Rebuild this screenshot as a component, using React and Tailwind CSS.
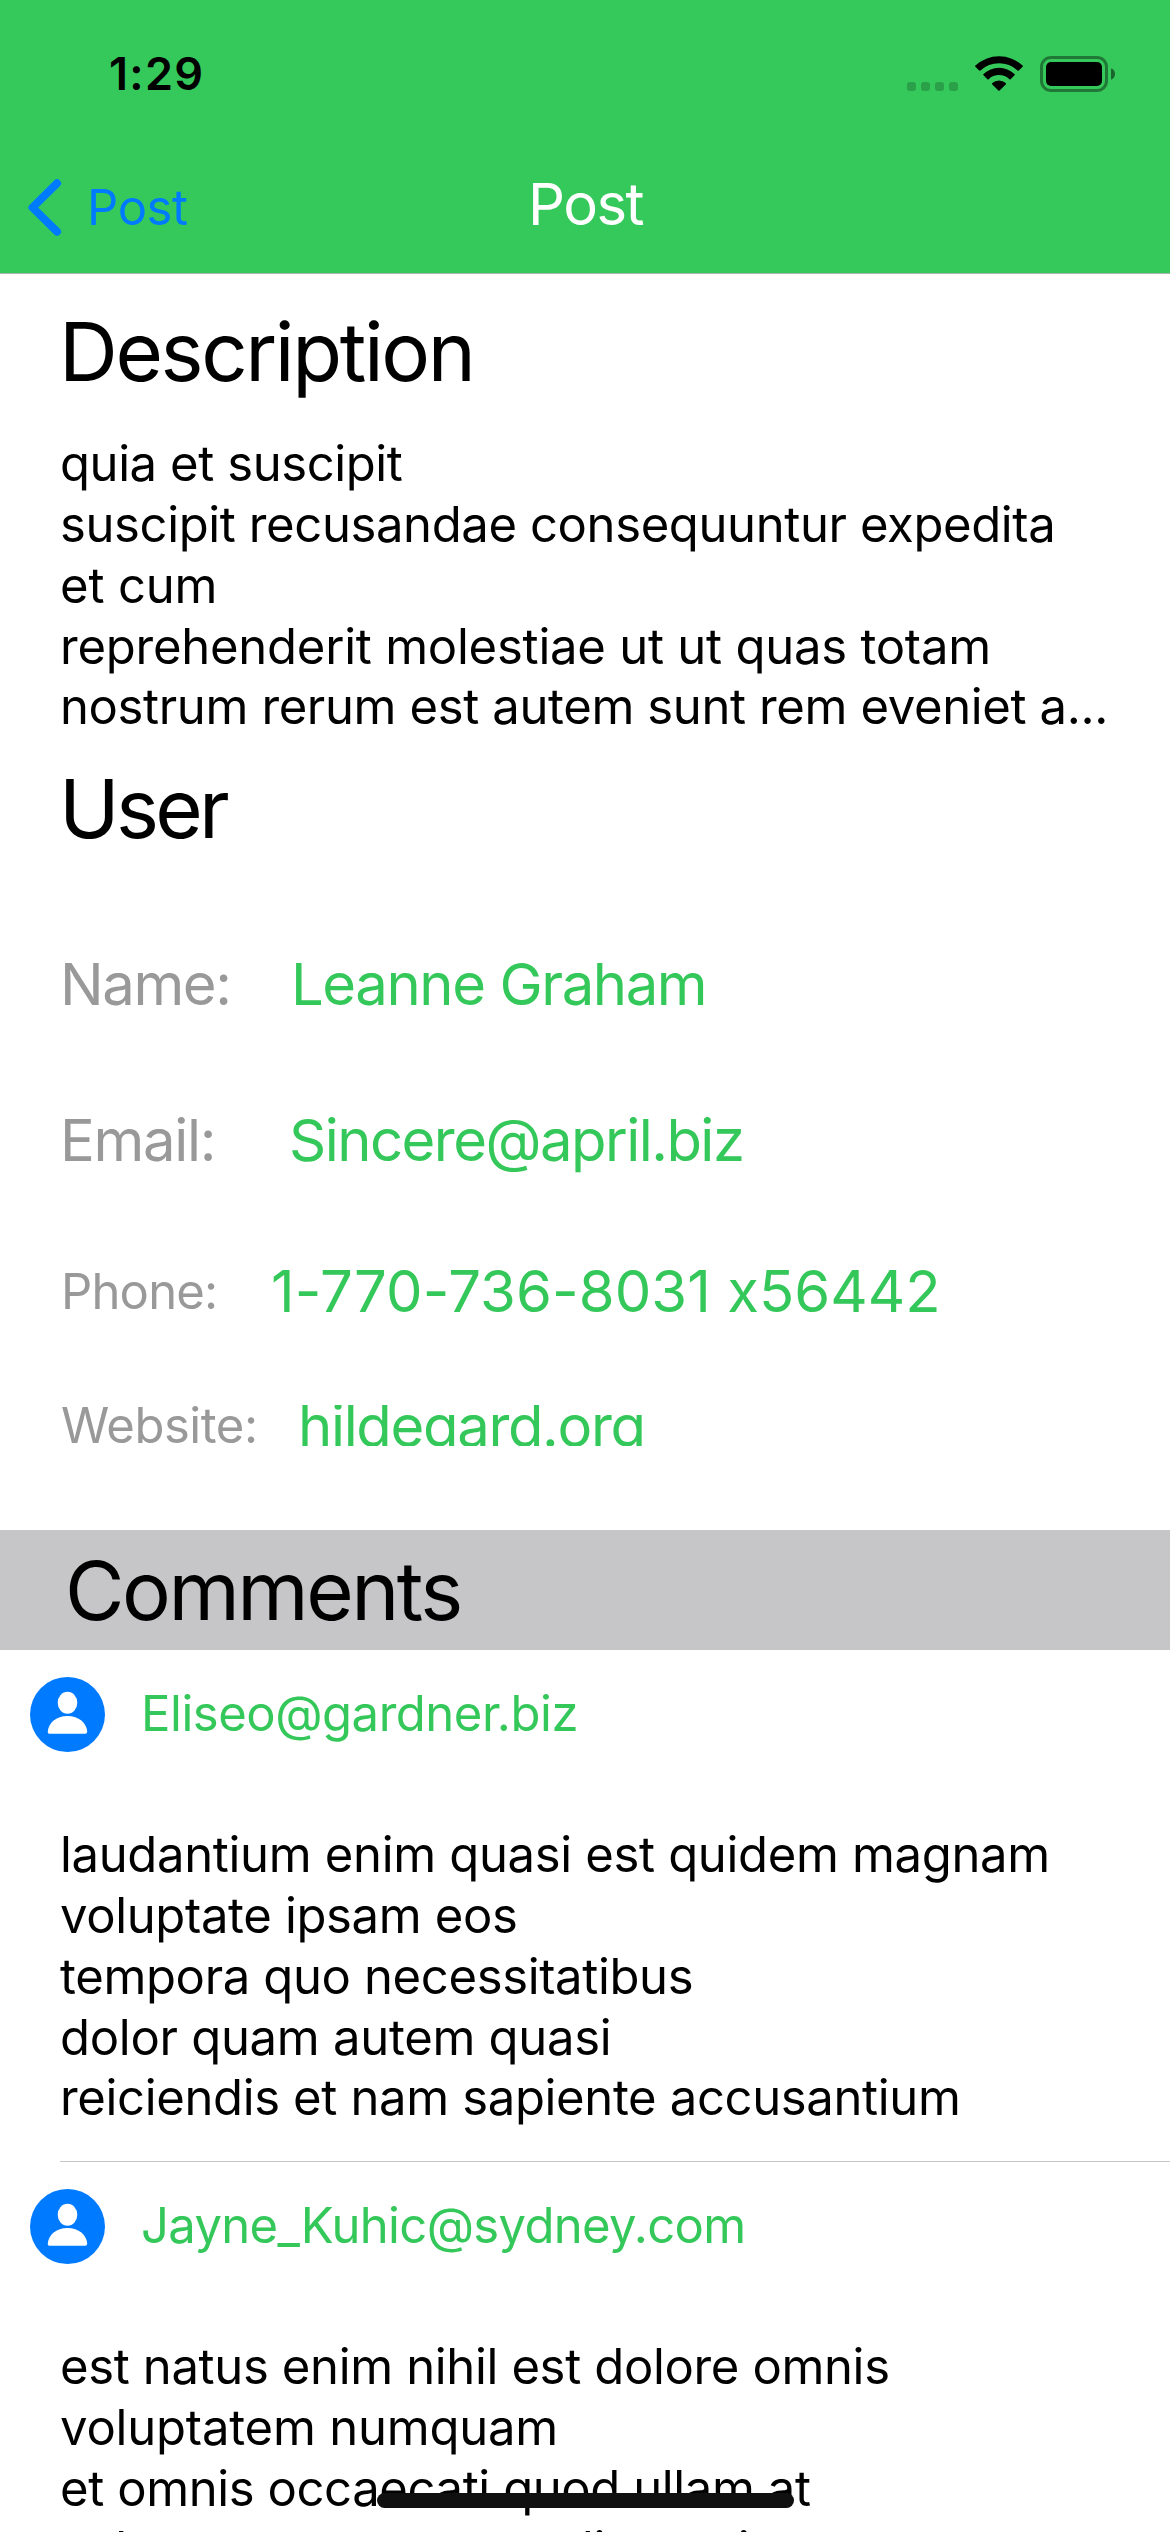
const body = "text-[49px] leading-[60.86px] whitespace-nowrap";
const heading = "text-[81.5px] leading-[100px] whitespace-nowrap";

const description = [
  { text: "quia et suscipit", tracking: "tracking-[-0.41px]" },
  { text: "suscipit recusandae consequuntur expedita", tracking: "tracking-[-0.38px]" },
  { text: "et cum", tracking: "tracking-[-0.15px]" },
  { text: "reprehenderit molestiae ut ut quas totam", tracking: "tracking-[-0.23px]" },
  { text: "nostrum rerum est autem sunt rem eveniet a...", tracking: "tracking-[-0.37px]" },
];

const comments = [
  {
    email: "Eliseo@gardner.biz",
    tracking: "tracking-[-0.47px] ml-[36px]",
    lines: [
      { text: "laudantium enim quasi est quidem magnam", tracking: "tracking-[-0.33px]" },
      { text: "voluptate ipsam eos", tracking: "tracking-[-0.36px]" },
      { text: "tempora quo necessitatibus", tracking: "tracking-[-0.36px]" },
      { text: "dolor quam autem quasi", tracking: "tracking-[-0.28px]" },
      { text: "reiciendis et nam sapiente accusantium", tracking: "tracking-[-0.35px]" },
    ],
  },
  {
    email: "Jayne_Kuhic@sydney.com",
    tracking: "tracking-[-0.66px] ml-[36px]",
    lines: [
      { text: "est natus enim nihil est dolore omnis", tracking: "tracking-[-0.35px]" },
      { text: "voluptatem numquam", tracking: "tracking-[-0.2px]" },
      { text: "et omnis occaecati quod ullam at", tracking: "tracking-[-0.4px]" },
      { text: "voluptatem error expedita pariatur", tracking: "tracking-[-0.35px]" },
    ],
  },
];

function Lines({ lines }) {
  return (
    <div className="h-[305px] pl-[60px]">
      {lines.map((line) => (
        <p key={line.text} className={`${body} ${line.tracking}`}>
          {line.text}
        </p>
      ))}
    </div>
  );
}

function WifiIcon() {
  return (
    <svg className="h-[36px] w-[48px]" viewBox="0 0 48 36" fill="black">
      <path d="M0.4 10.6 A34.6 34.6 0 0 1 47.6 10.6 Q48.2 11.2 47.6 11.8 L43.8 15.6 Q43.2 16.1 42.6 15.6 A27 27 0 0 0 5.4 15.6 Q4.8 16.1 4.2 15.6 L0.4 11.8 Q-0.2 11.2 0.4 10.6Z" />
      <path d="M8.5 19.1 A22.2 22.2 0 0 1 39.5 19.1 Q40.1 19.7 39.5 20.3 L35.6 24.3 Q35 24.8 34.4 24.3 A15 15 0 0 0 13.6 24.3 Q13 24.8 12.4 24.3 L8.5 20.3 Q7.9 19.7 8.5 19.1Z" />
      <path d="M17.3 28 A10 10 0 0 1 30.7 28 Q31.4 28.7 30.7 29.4 L24.6 35.6 Q24 36.1 23.4 35.6 L17.3 29.4 Q16.6 28.7 17.3 28Z" />
    </svg>
  );
}

function BatteryIcon() {
  return (
    <svg className="h-[36px] w-[76px]" viewBox="0 0 76 36" fill="black">
      <rect x="1.5" y="1.5" width="65" height="33" rx="9.5" fill="none" stroke="black" strokeWidth="3" opacity="0.4" />
      <rect x="6" y="6" width="56" height="24" rx="5" />
      <path d="M71 12.2 C73.6 13.2 75 15.4 75 18 C75 20.6 73.6 22.8 71 23.8Z" opacity="0.5" />
    </svg>
  );
}

function Avatar() {
  return (
    <svg className="size-[75px] shrink-0" viewBox="0 0 75 75">
      <circle cx="37.5" cy="37.5" r="37.5" fill="#007aff" />
      <ellipse cx="37.5" cy="25.7" rx="9.8" ry="11" fill="white" />
      <path
        d="M20 56.7 Q17.6 56.7 17.8 54.4 C18.6 46 26 39 37.5 39 C49 39 56.4 46 57.2 54.4 Q57.4 56.7 55 56.7Z"
        fill="white"
      />
    </svg>
  );
}

function Header() {
  return (
    <header className="h-[274px] border-b border-[#a9b5ac] bg-[#35c95b]">
      <div className="flex h-[141px] items-start justify-between pr-[54px] pl-[109px]">
        <span className="mt-[44px] text-[45px] leading-[60px] font-semibold tracking-[1.3px]">1:29</span>
        <div className="mt-[55px] flex items-start">
          <div className="mt-[27px] flex gap-[5px] opacity-20">
            <i className="size-[9px] rounded-[3px] bg-black" />
            <i className="size-[9px] rounded-[3px] bg-black" />
            <i className="size-[9px] rounded-[3px] bg-black" />
            <i className="size-[9px] rounded-[3px] bg-black" />
          </div>
          <div className="ml-[17px]">
            <WifiIcon />
          </div>
          <div className="mt-px ml-[17px]">
            <BatteryIcon />
          </div>
        </div>
      </div>
      <nav className="grid h-[132px] grid-cols-[528px_1fr] items-center">
        <div className="flex items-center pl-[28px] text-[#007aff]">
          <svg className="h-[57px] w-[34px]" viewBox="0 0 34 57" fill="none" stroke="currentColor" strokeWidth="8" strokeLinecap="round" strokeLinejoin="round">
            <path d="M29 4.3 L4.5 28.5 L29 52.7" />
          </svg>
          <span className="ml-[25px] text-[49px] leading-[61px] tracking-[-0.4px]">Post</span>
        </div>
        <h1 className="mb-[6px] text-[58px] leading-[72px] tracking-[-1.5px] text-white">Post</h1>
      </nav>
    </header>
  );
}

function Row({ label, labelClass, value, valueClass, className }) {
  return (
    <div className={`flex items-center whitespace-nowrap ${className}`}>
      <span className={`shrink-0 text-[#999999] ${labelClass}`}>{label}</span>
      <span className={`text-[58px] leading-[72px] text-[#34c759] ${valueClass}`}>{value}</span>
    </div>
  );
}

export default function App() {
  return (
    <div className="relative h-[2532px] w-[1170px] overflow-hidden bg-white font-['Inter',sans-serif] text-black">
      <Header />
      <section className="h-[1256px] pt-[28px]">
        <h2 className={`${heading} pl-[59px] tracking-[-2.4px]`}>Description</h2>
        <div className="pt-[32px]">
          <Lines lines={description} />
        </div>
        <h2 className={`${heading} mt-[20px] pl-[59px] tracking-[-3.7px]`}>User</h2>
        <Row
          className="mt-[89px] h-[72px]"
          label="Name:"
          labelClass="w-[291px] pl-[60px] text-[58px] leading-[72px] tracking-[-1.4px]"
          value="Leanne Graham"
          valueClass="tracking-[-1.43px]"
        />
        <Row
          className="mt-[84px] h-[72px]"
          label="Email:"
          labelClass="w-[289px] pl-[60px] text-[58px] leading-[72px] tracking-[-1.3px]"
          value="Sincere@april.biz"
          valueClass="tracking-[-1.53px]"
        />
        <Row
          className="mt-[79px] h-[72px]"
          label="Phone:"
          labelClass="w-[271px] pl-[61px] text-[49px] leading-[61px] tracking-[-0.84px]"
          value="1-770-736-8031 x56442"
          valueClass="tracking-[0.06px]"
        />
        <Row
          className="mt-[68px] h-[61px]"
          label="Website:"
          labelClass="w-[298px] pl-[61px] text-[49px] leading-[61px] tracking-[-0.47px]"
          value="hildegard.org"
          valueClass="flex h-[41px] items-center overflow-hidden tracking-[-1.35px]"
        />
      </section>
      <h2 className="h-[120px] bg-[#c6c6c8] pl-[65px] text-[81.5px] leading-[121px] tracking-[-2.5px]">Comments</h2>
      {comments.map((c) => (
        <article key={c.email} className="pt-[27px]">
          <div className="mb-[73px] flex items-center pl-[30px]">
            <Avatar />
            <span className={`${body} text-[#34c759] ${c.tracking}`}>{c.email}</span>
          </div>
          <Lines lines={c.lines} />
          <div className="mt-[31px] ml-[60px] h-px bg-[#c6c6c8]" />
        </article>
      ))}
      <div className="absolute top-[2493px] left-[377px] h-[15px] w-[417px] rounded-full bg-[#101010]" />
    </div>
  );
}
